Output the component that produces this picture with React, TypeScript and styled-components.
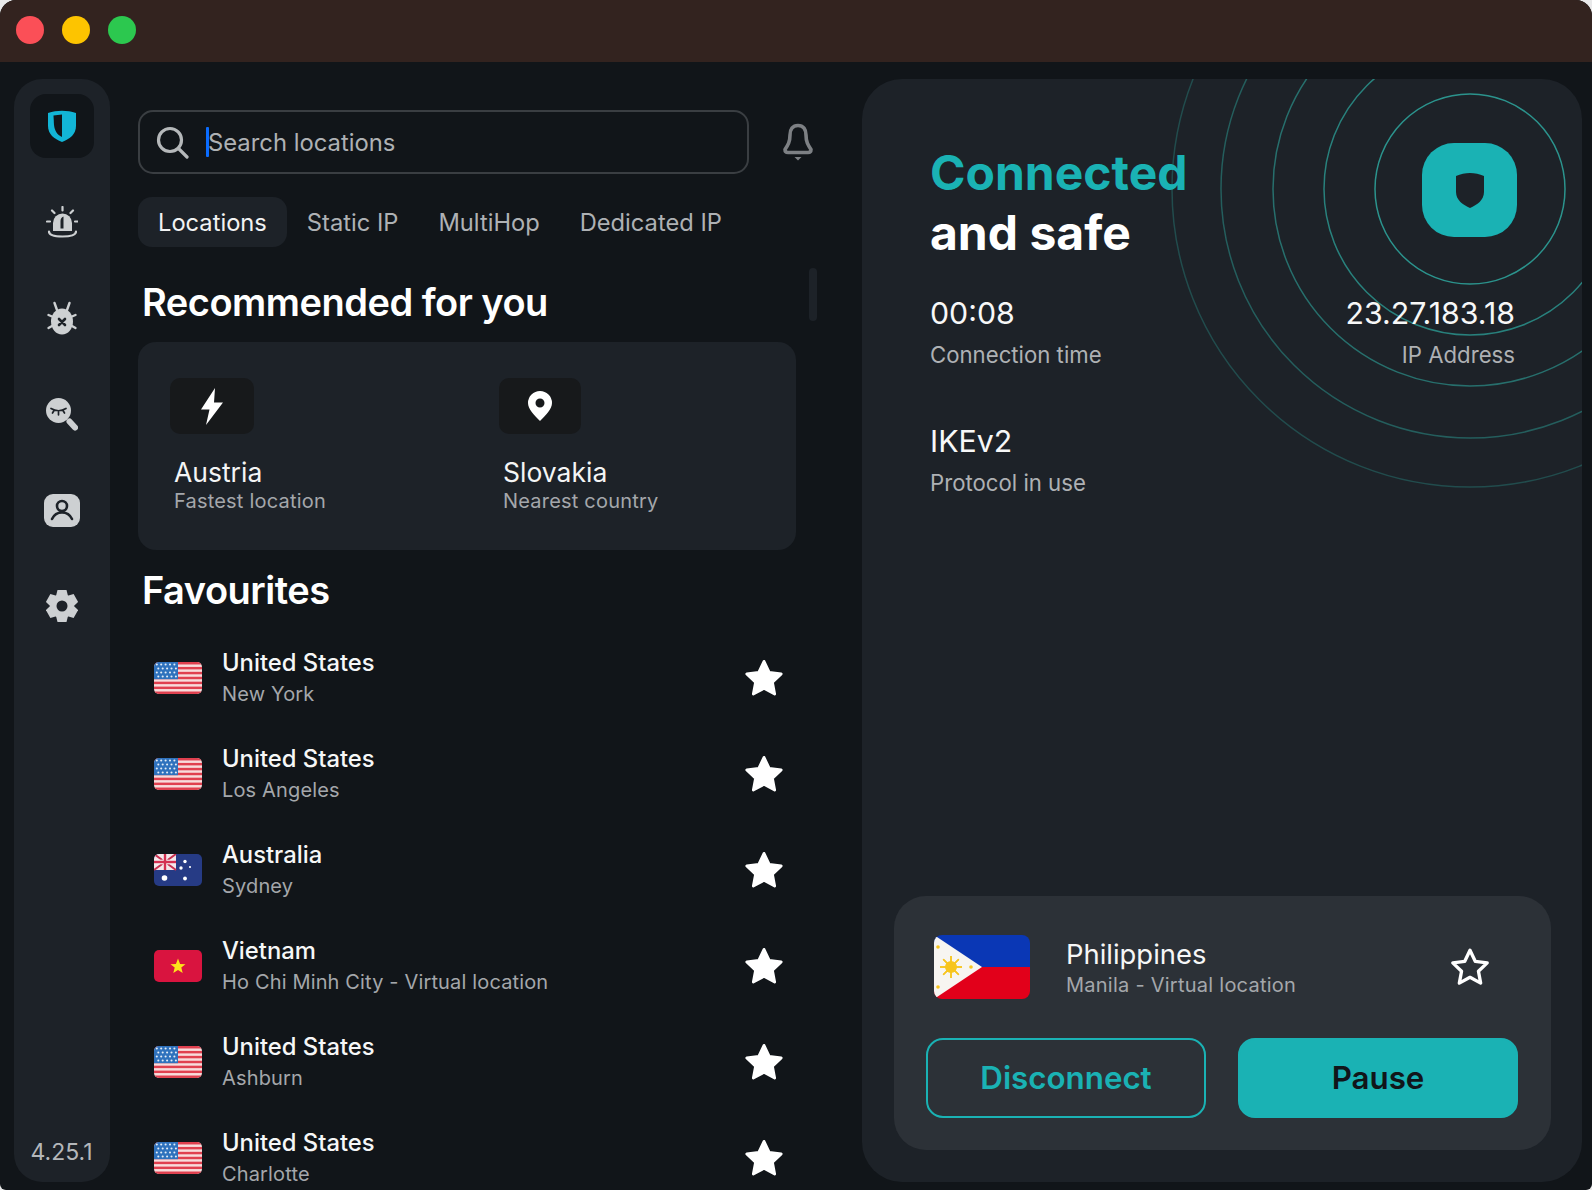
import React from "react";
import styled, { createGlobalStyle } from "styled-components";

const Global = createGlobalStyle`
  html, body { margin: 0; padding: 0; background: #e9e9ea; }
  body { font-family: Inter, "Noto Sans", "Liberation Sans", sans-serif; }
  * { box-sizing: border-box; }
`;

const Win = styled.div`
  width: 1592px; height: 1190px; display: flex; flex-direction: column; overflow: hidden;
  background: #111519; border-radius: 16px 16px 6px 6px; color: #fff;
`;
const TitleBar = styled.div`
  height: 62px; flex: none; background: #33231f; display: flex; align-items: center; gap: 18px; padding: 0 16px 2px;
`;
const Light = styled.span<{ $c: string }>`
  width: 28px; height: 28px; border-radius: 50%; background: ${p => p.$c};
`;
const Body = styled.div`
  flex: 1; min-height: 0; display: flex; padding: 17px 10px 8px 14px;
`;
const Sidebar = styled.nav`
  width: 96px; flex: none; background: #1d2228; border-radius: 28px; display: flex; flex-direction: column; align-items: center; padding-top: 15px;
`;
const LogoBox = styled.div`
  width: 64px; height: 64px; background: #111519; border-radius: 16px; display: flex; align-items: center; justify-content: center; margin-bottom: 16px;
`;
const NavItem = styled.div`
  height: 96px; width: 100%; display: flex; align-items: center; justify-content: center; flex: none;
`;
const Version = styled.div`
  margin-top: auto; padding-bottom: 16px; padding-right: 1px; font-size: 23px; line-height: 28px; color: #b4b7ba;
`;

const Middle = styled.section`
  width: 724px; flex: none; margin-left: 28px; padding-top: 31px; position: relative;
`;
const TopRow = styled.div`
  display: flex; align-items: center; gap: 33px;
`;
const SearchBox = styled.div`
  width: 611px; height: 64px; border: 2px solid #3a3e42; border-radius: 15px; display: flex; align-items: center; padding-left: 16px;
`;
const SearchText = styled.span`
  font-size: 23.8px; color: #aeb1b4; margin-left: -1px;
`;
const Caret = styled.span`
  width: 3px; height: 30px; background: #0a6cff; margin-left: 17px; border-radius: 1px;
`;
const Tabs = styled.div`
  display: flex; margin-top: 23px;
`;
const Tab = styled.div<{ $active?: boolean }>`
  height: 50px; padding: 0 20px; border-radius: 14px; display: flex; align-items: center; font-size: 23.7px;
  background: ${p => (p.$active ? "#1d2228" : "transparent")}; color: ${p => (p.$active ? "#f2f3f3" : "#aeb1b4")};
`;
const Heading = styled.h2<{ $top: number }>`
  margin: ${p => p.$top}px 0 15px; padding-left: 4px; font-size: 38px; line-height: 50px; font-weight: 600; letter-spacing: -0.5px; color: #fff;
`;
const ScrollThumb = styled.div`
  position: absolute; left: 671px; top: 189px; width: 8px; height: 53px; border-radius: 4px; background: #1d2228;
`;
const RecCard = styled.div`
  width: 658px; height: 208px; background: #1d2228; border-radius: 18px; display: grid; grid-template-columns: 329px 1fr; padding: 36px 0 0 32px;
`;
const IconBox = styled.div<{ $w: number; $bg: string }>`
  width: ${p => p.$w}px; height: 56px; border-radius: 10px; background: ${p => p.$bg}; display: flex; align-items: center; justify-content: center;
`;
const RecName = styled.div`
  margin: 22px 0 0 4px; font-size: 26.5px; line-height: 32px; color: #f4f5f5;
`;
const RecSub = styled.div`
  margin: 0 0 0 4px; font-size: 20px; line-height: 26px; letter-spacing: 0.2px; color: #a4a7ab;
`;
const Row = styled.div`
  height: 96px; width: 658px; display: flex; align-items: center; padding: 0 12px 0 16px;
`;
const FlagSvg = styled.svg`
  border-radius: 5px; flex: none; display: block;
`;
const BigFlagSvg = styled(FlagSvg)`
  border-radius: 8px;
`;
const RowText = styled.div`
  margin-left: 20px; flex: 1; padding-top: 1px;
`;
const RowName = styled.div`
  font-size: 23.8px; line-height: 30px; font-weight: 500; color: #f6f7f7;
`;
const RowSub = styled.div`
  margin-top: 1px; font-size: 20px; line-height: 30px; letter-spacing: 0.15px; color: #a4a7ab;
`;

const Panel = styled.section`
  width: 720px; flex: none; background: #1d2228; border-radius: 40px; position: relative; overflow: hidden; display: flex; flex-direction: column;
`;
const RingSvg = styled.svg`
  position: absolute; left: 0; top: 0;
`;
const Content = styled.div`
  position: relative; z-index: 1; padding: 64px 67px 0 68px; display: flex; flex-direction: column; flex: 1;
`;
const HeroRow = styled.div`
  display: flex; justify-content: space-between; align-items: flex-start;
`;
const Hero = styled.h1`
  margin: 0; font-size: 48px; line-height: 60px; font-weight: 700; color: #fff;
`;
const HeroAccent = styled.span`
  color: #1ab2b4; display: block;
`;
const ShieldTile = styled.div`
  width: 95px; height: 94px; margin-right: -2px; border-radius: 32px; background: #1ab2b4; display: flex; align-items: center; justify-content: center;
`;
const StatRow = styled.div<{ $top: number }>`
  display: flex; justify-content: space-between; margin-top: ${p => p.$top}px;
`;
const Stat = styled.div<{ $right?: boolean }>`
  text-align: ${p => (p.$right ? "right" : "left")};
`;
const StatValue = styled.div`
  font-size: 30.3px; line-height: 40px; color: #f7f8f8;
`;
const StatLabel = styled.div`
  margin-top: 7px; font-size: 22.2px; line-height: 30px; color: #aeb1b4;
`;
const BottomCard = styled.div`
  margin: auto -36px 32px -36px; height: 254px; background: #2c3137; border-radius: 32px; padding: 39px 32px 32px;
`;
const InfoRow = styled.div`
  display: flex; align-items: center; height: 64px; margin-left: 8px; margin-right: 29px;
`;
const InfoText = styled.div`
  margin-left: 36px; flex: 1; padding-top: 1px;
`;
const InfoName = styled.div`
  font-size: 27.4px; line-height: 32px; color: #f6f7f7;
`;
const InfoSub = styled.div`
  margin-top: 2px; font-size: 20px; line-height: 26px; letter-spacing: 0.25px; color: #a4a7ab;
`;
const Buttons = styled.div`
  display: flex; gap: 32px; margin-top: 39px;
`;
const Button = styled.div<{ $solid?: boolean }>`
  width: 280px; height: 80px; border-radius: 17px; padding-bottom: 1px; display: flex; align-items: center; justify-content: center; font-size: 31.3px; font-weight: 600;
  border: 2px solid #1ab2b4; background: ${p => (p.$solid ? "#1ab2b4" : "transparent")}; color: ${p => (p.$solid ? "#111519" : "#1ab2b4")};
`;

const G = "#cdd0d2";
const D = "#1d2228";

const LogoIcon = () => (
  <svg width="28" height="32" viewBox="0 0 28 32">
    <path d="M0 3C9 0 19 0 28 3V16C28 24 22 29 14 32C6 29 0 24 0 16Z" fill="#12b5d6" />
    <path d="M5.5 5.5L14 4.5V27C9 25 6.5 20 6 15Z" fill="#111519" />
  </svg>
);
const AlertIcon = () => (
  <svg width="32" height="32" viewBox="0 0 32 32" fill="none" stroke={G} strokeWidth="2.2" strokeLinecap="round">
    <path d="M7 25V17a9.5 9.5 0 0 1 19 0v8z" fill={G} stroke="none" />
    <path d="M14.5 22.5V15q0-3.5 3-4.500V22.500z" fill={D} stroke="none" />
    <path d="M16.500 1v3.500M6 4.500l2.500 2.500M27 4.500l-2.500 2.500M1 15.500h3M29 15.500h3" />
    <path d="M3 25.500c0 3 5 5 13.500 5s13.500-2 13.500-5" />
  </svg>
);
const BugIcon = () => (
  <svg width="32" height="34" viewBox="0 0 32 34" fill="none" stroke={G} strokeWidth="2.4" strokeLinecap="round">
    <ellipse cx="16" cy="20.500" rx="11" ry="13" fill={G} stroke="none" />
    <path d="M11 9L8.500 2M21 9l2.500-7M6 15.500L2.500 14M26 15.500l3.500-1.500M6 25l-3.500 2M26 25l3.500 2" />
    <path d="M13 18l6 6M19 18l-6 6" stroke={D} strokeWidth="2.600" />
  </svg>
);
const PeekIcon = () => (
  <svg width="32" height="33" viewBox="0 0 32 33" fill="none">
    <circle cx="12.500" cy="12.500" r="12.500" fill={G} />
    <path d="M23.500 23.500L29 29.500" stroke={G} strokeWidth="6" strokeLinecap="round" />
    <path d="M5 10.500q7.500 4.500 15 0M8 12.500l-1.500 2.500M12.500 14v2.800M17 12.500l1.500 2.500" stroke={D} strokeWidth="1.700" strokeLinecap="round" />
  </svg>
);
const PersonIcon = () => (
  <svg width="36" height="33" viewBox="0 0 36 33" fill="none">
    <rect width="36" height="33" rx="9" fill={G} />
    <circle cx="18" cy="12" r="5" stroke={D} strokeWidth="2.600" />
    <path d="M8 25q3-6.500 10-6.500t10 6.500" stroke={D} strokeWidth="2.600" strokeLinecap="round" />
  </svg>
);
const GearIcon = () => (
  <svg width="32" height="32" viewBox="-16 -16 32 32">
    <circle r="12" fill={G} />
    {[0, 60, 120, 180, 240, 300].map(a => (
      <path key={a} d="M-4.500-16h9l1.500 6h-12z" fill={G} transform={`rotate(${a})`} />
    ))}
    <circle r="5.500" fill={D} />
  </svg>
);
const SearchIcon = () => (
  <svg width="33" height="33" viewBox="0 0 33 33" fill="none" stroke="#b5b8ba" strokeWidth="3.2" strokeLinecap="round">
    <circle cx="14" cy="14" r="11.500" />
    <path d="M22.500 22.500L31 31" />
  </svg>
);
const BellIcon = () => (
  <svg width="32" height="38" viewBox="0 0 32 38" fill="none" stroke="#7d8084" strokeWidth="3.6" strokeLinejoin="round">
    <path d="M16 2.500c-5.500 0-8 4-8 9.500 0 7-2 10-5 14.500 0 2.500 1 3 3 3h20c2 0 3-.5 3-3-3-4.500-5-7.500-5-14.500 0-5.500-2.500-9.500-8-9.500z" />
    <path d="M12.500 34h7l-3.500 3.500z" fill="#7d8084" stroke="none" />
  </svg>
);
const BoltIcon = () => (
  <svg width="22" height="37" viewBox="0 0 22 37">
    <path d="M14 0L0 21.500h8.500L5 37 22 14.500H13z" fill="#fff" />
  </svg>
);
const PinIcon = () => (
  <svg width="24" height="30" viewBox="0 0 24 30">
    <path fillRule="evenodd" d="M12 0a12 12 0 0 1 12 12c0 6-6 12-12 18C6 24 0 18 0 12A12 12 0 0 1 12 0zm0 7.500a4.500 4.500 0 1 0 0 9 4.500 4.500 0 0 0 0-9z" fill="#fff" />
  </svg>
);
const STAR = "18 3 22.700 12.900 33.500 14.300 25.600 21.800 27.600 32.500 18 27.300 8.400 32.500 10.400 21.800 2.500 14.300 13.300 12.900";
const Star = ({ outline }: { outline?: boolean }) => (
  <svg width="40" height="40" viewBox="0 0 36 36">
    <polygon points={STAR} fill={outline ? "none" : "#fff"} stroke="#fff" strokeWidth={outline ? 3 : 2.5} strokeLinejoin="round" />
  </svg>
);

const UsFlag = () => (
  <FlagSvg width="48" height="32" viewBox="0 0 48 32">
    <rect width="48" height="32" fill="#f7dcdc" />
    {[0, 1, 2, 3, 4, 5, 6].map(i => <rect key={i} y={i * 4.92} width="48" height="2.460" fill="#e0404f" />)}
    <rect width="24" height="17.200" fill="#2f72bd" />
    {[0, 1, 2, 3].flatMap(r => [0, 1, 2, 3, 4].map(c => (
      <circle key={`${r}-${c}`} cx={2.800 + c * 4.400 + (r % 2 ? 1.500 : 0)} cy={2.500 + r * 4} r="1.050" fill="#e3edf7" />
    )))}
  </FlagSvg>
);
const AuFlag = () => (
  <FlagSvg width="48" height="32" viewBox="0 0 48 32">
    <rect width="48" height="32" fill="#263b85" />
    <rect width="22" height="16" fill="#f4e6ea" />
    <path d="M0 0l22 16M22 0L0 16" stroke="#c8304f" strokeWidth="2" />
    <path d="M11 0v16M0 8h22" stroke="#f6f6f6" strokeWidth="4.500" />
    <path d="M11 0v16M0 8h22" stroke="#d43152" strokeWidth="2.500" />
    <circle cx="10.500" cy="24" r="2.800" fill="#fff" />
    <circle cx="31" cy="24.500" r="1.900" fill="#fff" />
    <circle cx="31" cy="7.500" r="1.700" fill="#fff" />
    <circle cx="27" cy="14" r="1.700" fill="#fff" />
    <circle cx="36" cy="13" r="1.100" fill="#fff" />
  </FlagSvg>
);
const VnFlag = () => (
  <FlagSvg width="48" height="32" viewBox="0 0 48 32">
    <rect width="48" height="32" fill="#d9143f" />
    <polygon points="24,8.500 26.100,14 31.500,14.200 27.300,17.600 28.700,23 24,19.900 19.300,23 20.700,17.600 16.500,14.200 21.900,14" fill="#fde31b" />
  </FlagSvg>
);
const PhFlag = () => (
  <BigFlagSvg width="96" height="64" viewBox="0 0 96 64">
    <rect width="96" height="32" fill="#0a37b5" />
    <rect y="32" width="96" height="32" fill="#e2001a" />
    <polygon points="0,0 48,32 0,64" fill="#f7f5f1" />
    <circle cx="17" cy="32" r="6" fill="#f7c51e" />
    {[0, 45, 90, 135].map(a => (
      <path key={a} d="M17 21V43M6 32H28" stroke="#f7c51e" strokeWidth="1.500" transform={`rotate(${a} 17 32)`} />
    ))}
    <circle cx="4" cy="12" r="1.800" fill="#f7c51e" />
    <circle cx="4" cy="52" r="1.800" fill="#f7c51e" />
    <circle cx="37" cy="32" r="1.800" fill="#f7c51e" />
  </BigFlagSvg>
);

const rows: { name: string; sub: string; flag: React.ReactNode }[] = [
  { name: "United States", sub: "New York", flag: <UsFlag /> },
  { name: "United States", sub: "Los Angeles", flag: <UsFlag /> },
  { name: "Australia", sub: "Sydney", flag: <AuFlag /> },
  { name: "Vietnam", sub: "Ho Chi Minh City - Virtual location", flag: <VnFlag /> },
  { name: "United States", sub: "Ashburn", flag: <UsFlag /> },
  { name: "United States", sub: "Charlotte", flag: <UsFlag /> },
];
const rings = [
  { r: 95, o: 0.95 },
  { r: 146, o: 0.8 },
  { r: 197, o: 0.65 },
  { r: 249, o: 0.5 },
  { r: 298, o: 0.35 },
];

export default function App() {
  return (
    <>
      <Global />
      <Win>
        <TitleBar>
          <Light $c="#fb4f57" />
          <Light $c="#fdc400" />
          <Light $c="#2cc84f" />
        </TitleBar>
        <Body>
          <Sidebar>
            <LogoBox><LogoIcon /></LogoBox>
            <NavItem><AlertIcon /></NavItem>
            <NavItem><BugIcon /></NavItem>
            <NavItem><PeekIcon /></NavItem>
            <NavItem><PersonIcon /></NavItem>
            <NavItem><GearIcon /></NavItem>
            <Version>4.25.1</Version>
          </Sidebar>
          <Middle>
            <TopRow>
              <SearchBox>
                <SearchIcon />
                <Caret />
                <SearchText>Search locations</SearchText>
              </SearchBox>
              <BellIcon />
            </TopRow>
            <Tabs>
              <Tab $active>Locations</Tab>
              <Tab>Static IP</Tab>
              <Tab>MultiHop</Tab>
              <Tab>Dedicated IP</Tab>
            </Tabs>
            <ScrollThumb />
            <Heading $top={30}>Recommended for you</Heading>
            <RecCard>
              <div>
                <IconBox $w={84} $bg="#17191b"><BoltIcon /></IconBox>
                <RecName>Austria</RecName>
                <RecSub>Fastest location</RecSub>
              </div>
              <div>
                <IconBox $w={82} $bg="#17191b"><PinIcon /></IconBox>
                <RecName>Slovakia</RecName>
                <RecSub>Nearest country</RecSub>
              </div>
            </RecCard>
            <Heading $top={15}>Favourites</Heading>
            {rows.map((r, i) => (
              <Row key={i}>
                {r.flag}
                <RowText>
                  <RowName>{r.name}</RowName>
                  <RowSub>{r.sub}</RowSub>
                </RowText>
                <Star />
              </Row>
            ))}
          </Middle>
          <Panel>
            <RingSvg width="720" height="1103" viewBox="0 0 720 1103" fill="none">
              {rings.map(x => (
                <circle key={x.r} cx="608" cy="110" r={x.r} stroke="#2c9a92" strokeOpacity={x.o} strokeWidth="1.500" />
              ))}
            </RingSvg>
            <Content>
              <HeroRow>
                <Hero><HeroAccent>Connected</HeroAccent>and safe</Hero>
                <ShieldTile>
                  <svg width="28" height="36" viewBox="0 0 28 36">
                    <path d="M0 4C9 0 19 0 28 4V20C28 28 21 33 14 36C7 33 0 28 0 20Z" fill="#1d2228" />
                  </svg>
                </ShieldTile>
              </HeroRow>
              <StatRow $top={30}>
                <Stat>
                  <StatValue>00:08</StatValue>
                  <StatLabel>Connection time</StatLabel>
                </Stat>
                <Stat $right>
                  <StatValue>23.27.183.18</StatValue>
                  <StatLabel>IP Address</StatLabel>
                </Stat>
              </StatRow>
              <StatRow $top={51}>
                <Stat>
                  <StatValue>IKEv2</StatValue>
                  <StatLabel>Protocol in use</StatLabel>
                </Stat>
              </StatRow>
              <BottomCard>
                <InfoRow>
                  <PhFlag />
                  <InfoText>
                    <InfoName>Philippines</InfoName>
                    <InfoSub>Manila - Virtual location</InfoSub>
                  </InfoText>
                  <Star outline />
                </InfoRow>
                <Buttons>
                  <Button>Disconnect</Button>
                  <Button $solid>Pause</Button>
                </Buttons>
              </BottomCard>
            </Content>
          </Panel>
        </Body>
      </Win>
    </>
  );
}
